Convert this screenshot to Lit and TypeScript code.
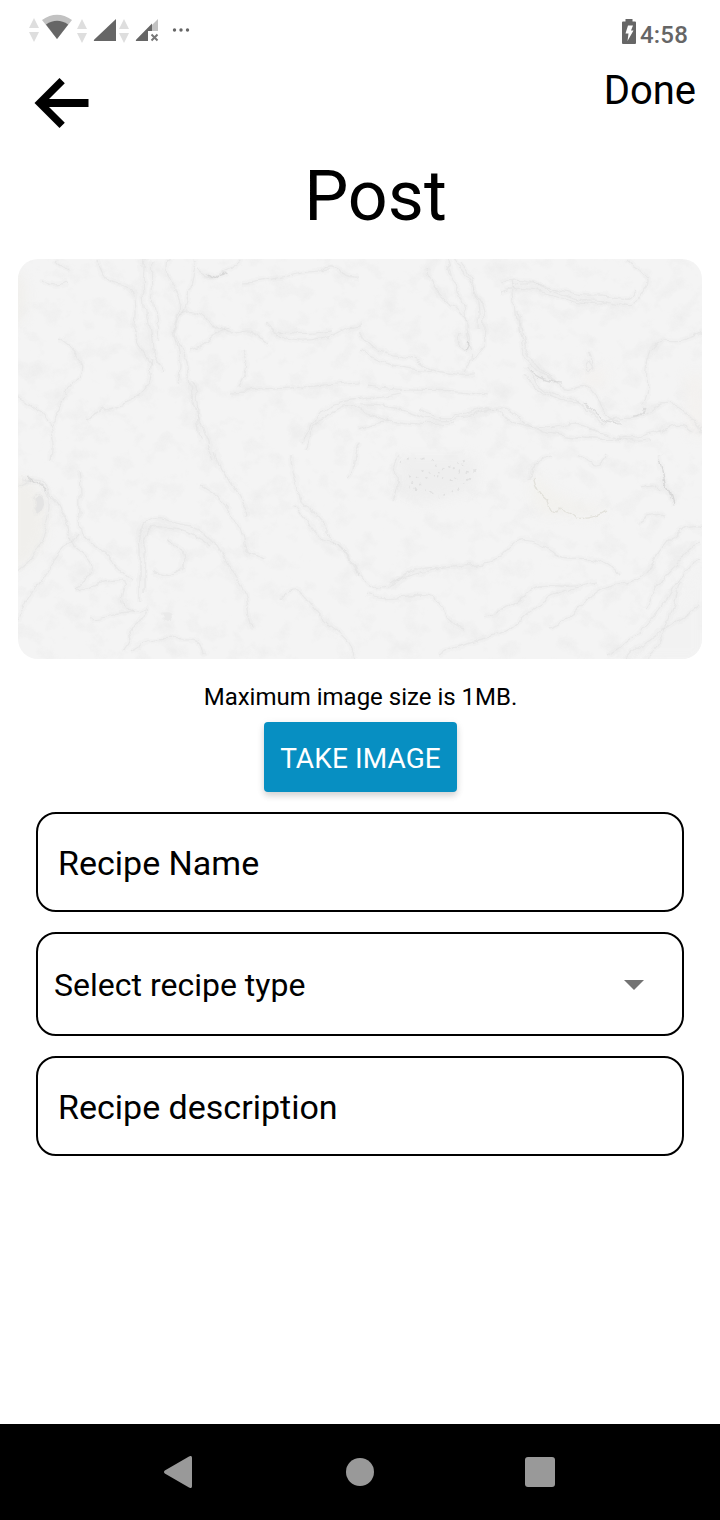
import { LitElement, html, css, svg } from "lit";
import { customElement, property } from "lit/decorators.js";

@customElement("status-bar")
class StatusBar extends LitElement {
  static styles = css`
    :host { display: flex; justify-content: space-between; height: 64px; color: #666; }
    svg { display: block; }
    .right { display: flex; align-items: flex-start; padding-right: 32px; }
    .battery { margin: 19px 4px 0 0; }
    .time { font-size: 24px; font-weight: 500; line-height: 28px; padding-top: 21px; letter-spacing: 0.2px; }
  `;
  render() {
    return html`
      <svg width="200" height="60" viewBox="0 0 200 60">
        <g fill="#dedede">
          <path d="M34 18l5 10H29zM29 32h10l-5 10z" />
          <path d="M82 19l5 10H77zM77 33h10l-5 10z" />
          <path d="M124 19l5 10h-10zM119 33h10l-5 10z" />
        </g>
        <path fill="#c2c2c2" d="M42 20Q57 9.500 72 20L57 39z" />
        <path fill="#666" d="M46 24.500Q57 17 68.200 24.500L57 39z" />
        <path fill="#666" d="M116 19v22H95q-2 0-.7-1.500z" />
        <path fill="#c2c2c2" d="M158 19v12h-6v-6z" />
        <path fill="#666" d="M152 23.500V31h-4v10h-11q-2 0-.7-1.500z" />
        <path fill="none" stroke="#777" stroke-width="2" d="M151.500 34.500l6 6m0-6l-6 6" />
        <g fill="#666"><circle cx="174.500" cy="30" r="1.700" /><circle cx="181" cy="30" r="1.700" /><circle cx="187.500" cy="30" r="1.700" /></g>
      </svg>
      <div class="right">
        <svg class="battery" width="14" height="25" viewBox="0 0 14 25">
          <path fill="#666" d="M3.500 0h7v2.500H13q1 0 1 1V24q0 1-1 1H1q-1 0-1-1V3.500q0-1 1-1h2.500z" />
          <path fill="#fff" d="M6 6.500h5L9 11.500h2.500L5.500 22l1-7.500H3.500z" />
        </svg>
        <span class="time">4:58</span>
      </div>`;
  }
}

const veins = [
  "M96 259C100 275 108 284 122 284C138 288 137 310 135 325C132 344 145 356 153 366",
  "M145 259C140 295 148 320 151 340S156 360 164 372",
  "M152 262C149 292 158 318 158 342",
  "M168 259C163 285 180 290 181 302S170 322 176 340S180 370 178 385",
  "M196 262C188 282 192 300 184 312C170 322 176 340 184 352C193 366 188 390 196 410S207 436 213 459",
  "M194 380C198 400 198 420 201 440",
  "M198 270q14 12 28 1q12-4 18-14",
  "M206 272q8 10 22 2",
  "M180 315C205 300 214 340 238 333C250 328 255 332 268 344",
  "M244 283C275 282 300 270 330 270",
  "M268 322C280 345 308 342 320 339C338 336 338 328 360 325",
  "M280 330C290 334 305 335 332 331",
  "M191 350C209 345 209 332 230 330",
  "M243 350C253 370 240 380 239 386",
  "M230 392C275 390 320 385 360 382",
  "M88 420C110 400 130 410 144 388C153 385 150 371 153 360",
  "M18 397C50 410 56 438 52 460",
  "M60 340C90 360 83 375 74 382C61 401 58 418 50 430",
  "M18 485C40 470 48 486 50 495C65 510 67 534 75 548C93 560 100 572 75 590",
  "M22 478Q45 480 50 499C52 530 33 560 18 570",
  "M35 498q9-7 9 5q-4 17-9 5z",
  "M18 620C30 595 42 578 54 562S73 540 78 532",
  "M79 470C85 500 74 530 90 542C110 553 121 575 132 580",
  "M139 600V548C136 528 148 517 162 519C180 525 198 526 206 534C222 546 229 570 238 582S247 615 251 630",
  "M145 593V550C140 530 150 525 162 527C180 527 192 532 210 545",
  "M75 590C100 585 122 573 128 585C117 605 130 618 143 610S129 635 122 650",
  "M90 618C103 618 120 611 133 612",
  "M132 650C153 635 172 640 190 640S198 655 208 655",
  "M168 540q18 7 14 28q-14 15-29 3",
  "M200 486C225 500 237 516 242 538S249 550 263 560",
  "M215 450C220 477 243 490 247 515",
  "M291 455C290 475 300 485 302 500C320 520 333 538 345 550S358 570 360 575",
  "M294 503C309 518 308 535 328 539S347 557 360 574S380 590 390 588C400 580 412 564 440 568",
  "M283 600C300 575 310 612 335 630S345 650 357 659",
  "M306 449C312 425 322 420 333 411C352 396 365 416 390 421",
  "M300 441C319 424 314 415 333 403C368 397 382 397 400 393",
  "M360 330C375 360 399 351 421 364S464 374 475 374",
  "M360 351C380 364 416 374 430 370",
  "M446 259C455 292 465 300 466 325S477 352 464 371",
  "M453 259C471 284 486 302 485 327S482 344 472 361",
  "M461 263C479 288 480 312 479 329",
  "M460 332q-5 15 6 20q6-16 1-21",
  "M426 270C436 300 457 301 466 322",
  "M500 282C530 270 555 300 591 300S627 317 642 293S635 270 625 259",
  "M512 285C539 276 563 297 594 295S622 309 636 290",
  "M500 292C535 278 570 310 606 302",
  "M512 280C517 305 515 320 521 340C524 362 537 374 555 382",
  "M518 310C521 345 530 361 548 376S565 390 581 386S602 421 620 421",
  "M526 366C537 392 557 395 569 397S591 419 606 423",
  "M523 375C540 392 560 402 579 402",
  "M589 350C598 363 582 378 585 364S595 375 590 366",
  "M606 423C620 412 635 423 648 411C670 395 681 407 693 420S695 430 702 436",
  "M642 406C652 392 641 377 652 349C665 330 677 352 702 330",
  "M360 405C409 404 412 420 440 420S478 412 498 410S520 430 552 434S622 445 654 432S680 422 694 431",
  "M367 385C418 395 452 386 488 395",
  "M420 410C450 430 482 399 500 414S545 430 567 425S610 447 650 440",
  "M360 428C388 412 415 431 454 422",
  "M660 455C661 475 670 488 673 507",
  "M642 487q13-8 20 5M638 524q8-11 28-8",
  "M702 528C680 520 665 546 650 567S617 580 600 590S573 620 550 627",
  "M702 542C691 545 686 554 674 565S651 593 644 610",
  "M390 585C414 570 438 569 462 566S488 563 497 559S511 543 522 540S547 547 556 554S587 553 602 562S614 572 617 575",
  "M485 616Q510 611 530 590C541 580 560 590 580 585",
  "M366 595C390 605 418 590 435 600S442 622 465 630",
  "M440 655C477 635 500 640 520 620S560 590 598 584",
  "M607 655C635 640 653 620 672 592S690 565 702 559",
  "M628 659C643 640 661 635 702 603",
  "M640 659C668 645 669 615 681 582",
  "M360 445C351 454 361 467 346 480",
  "M400 455C389 470 403 485 393 499",
  "M550 455q-20 8-20 25M607 455q-7 20-30 0",
  "M320 270C340 260 335 278 360 277",
  "M70 270q-10-4-16-11M44 280q9 10 22 3",
];

@customElement("marble-preview")
class MarblePreview extends LitElement {
  static styles = css`
    :host { display: block; height: 400px; margin: 0 18px; border-radius: 20px; overflow: hidden; background: #f4f4f4; }
    svg { display: block; width: 100%; height: 100%; }
  `;
  render() {
    return html`<svg viewBox="18 259 684 400" color-interpolation-filters="sRGB">
      <defs>
        <filter id="rough" x="0" y="0" width="1" height="1">
          <feTurbulence type="fractalNoise" baseFrequency="0.055" numOctaves="4" seed="8" />
          <feDisplacementMap in="SourceGraphic" scale="10" xChannelSelector="R" yChannelSelector="G" />
          <feGaussianBlur stdDeviation="0.7" />
        </filter>
        <filter id="soft" x="-.5" y="-.5" width="2" height="2"><feGaussianBlur stdDeviation="6" /></filter>
        <filter id="grain" x="0" y="0" width="1" height="1">
          <feTurbulence type="fractalNoise" baseFrequency="0.045 0.05" numOctaves="5" seed="21" />
          <feColorMatrix values="0 0 0 0 .83  0 0 0 0 .83  0 0 0 0 .83  2 0 0 0 -1" />
        </filter>
      </defs>
      <rect x="18" y="259" width="684" height="400" filter="url(#grain)" opacity=".24" />
      <g filter="url(#soft)">
        <path fill="#f0efec" d="M10 475q38 5 36 45t-36 50zM10 270q20 5 15 35t-15 15z" />
        <path fill="#f2f1ee" d="M530 485q8 35 20 30t40 2l20-7q-60-10-70-35z" />
        <path fill="#f3f1ef" d="M582 370l25-2-3 20-20-3zM685 375h20v60h-15z" />
        <path fill="#eeeeee" d="M400 458h76l-2 30-50 15-25-12z" />
        <path fill="#f2f2f2" d="M702 560v99h-80l50-50z" />
      </g>
      <g filter="url(#rough)" fill="none" stroke="#e0e0e0">
        <rect x="18" y="259" width="684" height="400" stroke="none" />
        ${veins.map((d) => svg`<path d=${d} stroke-width="6" opacity=".13" /><path d=${d} stroke-width="1.200" opacity=".55" />`)}
        <g stroke="#c8c8c8" stroke-width="1.200">
          <path d="M530 371q10 12 32 12M584 403q15 20 40 20M632 416q8 1 11-7M465 352q5-4 3-10M660 460l13 45M28 476l19 15M208 273q8 8 19 1" opacity=".5" />
          <path d="M533 477q4 18 15 25q5 15 12 7q10 1 15 8q18 2 30-7" stroke="#e2e1db" />
        </g>
        <path stroke="#d6d6d6" stroke-width="2" stroke-dasharray="1 5 2 7" opacity=".6" d="M402 462l25-5 18 12 20-10-10 22-33-9-14 15 29 10 26-10 11-15-28-5-30 22-12-20" />
        <path fill="#e4e4e4" stroke="none" d="M36 500q9-7 9 6q-4 12-9 5z" />
        <path fill="#eaeaea" stroke="none" d="M162 613q9-3 8 7q-7 1-8-7z" />
      </g>
    </svg>`;
  }
}

@customElement("form-field")
class FormField extends LitElement {
  @property() label = "";
  @property({ type: Boolean }) dropdown = false;
  static styles = css`
    .box { box-sizing: border-box; display: flex; align-items: center; justify-content: space-between; height: 100px; padding: 2px 38px 0 20px; border: 2px solid #000; border-radius: 20px; font-size: 34px; line-height: 40px; }
    .select { height: 104px; padding: 2px 38px 0 16px; font-size: 32px; }
    svg { display: block; }
  `;
  render() {
    return html`<div class="box ${this.dropdown ? "select" : ""}">
      <span>${this.label}</span>
      ${this.dropdown ? html`<svg width="20" height="10" viewBox="0 0 20 10"><path fill="#737373" d="M0 0h20L10 10z" /></svg>` : ""}
    </div>`;
  }
}

@customElement("nav-bar")
class NavBar extends LitElement {
  static styles = css`
    :host { display: flex; justify-content: center; height: 96px; background: #000; }
    .cell { display: flex; align-items: center; justify-content: center; width: 180px; }
    svg { display: block; fill: #999; }
  `;
  render() {
    return html`
      <div class="cell"><svg width="32" height="32" viewBox="0 0 32 32"><path d="M.8 14.600 25 .4q3-1.300 3 1.400v28.400q0 2.700-3 1.400L.8 17.400q-1.600-1.400 0-2.800z" /></svg></div>
      <div class="cell"><svg width="28" height="28" viewBox="0 0 28 28"><circle cx="14" cy="14" r="14" /></svg></div>
      <div class="cell"><svg width="30" height="30" viewBox="0 0 30 30"><rect width="30" height="30" rx="3" /></svg></div>`;
  }
}

@customElement("app-root")
class AppRoot extends LitElement {
  static styles = css`
    :host { display: flex; flex-direction: column; height: 1520px; background: #fff; color: #000; font-family: Roboto, sans-serif; overflow: hidden; }
    .header { display: flex; justify-content: space-between; align-items: flex-start; height: 84px; padding: 0 24px 0 34px; }
    .back { display: block; margin-top: 14px; }
    .done { font-size: 40px; line-height: 48px; padding-top: 3px; }
    .title { margin: 0; padding-left: 31px; height: 111px; font-size: 70px; font-weight: 400; line-height: 96px; text-align: center; }
    .note { margin-top: 23px; padding-left: 1px; font-size: 24px; line-height: 30px; text-align: center; }
    .take { align-self: center; box-sizing: border-box; width: 193px; height: 70px; margin: 10px 0 20px 1px; padding: 3px 0 0; border: 0; border-radius: 4px; background: #078fc2; color: #fff; font: 400 28px/34px Roboto, sans-serif; letter-spacing: 0.1px; white-space: nowrap; box-shadow: 0 4px 6px rgba(0,0,0,.13), 0 2px 10px rgba(0,0,0,.07); }
    .form { display: flex; flex-direction: column; gap: 20px; padding: 0 36px; }
    nav-bar { margin-top: auto; }
  `;
  render() {
    return html`
      <status-bar></status-bar>
      <div class="header">
        <svg class="back" width="56" height="50" viewBox="0 0 56 50"><path d="M.5 25 25.500 0l5.300 5.300L15 21h39.500v8H15l15.800 15.700-5.300 5.300z" /></svg>
        <span class="done">Done</span>
      </div>
      <h1 class="title">Post</h1>
      <marble-preview></marble-preview>
      <div class="note">Maximum image size is 1MB.</div>
      <button class="take">TAKE IMAGE</button>
      <div class="form">
        <form-field label="Recipe Name"></form-field>
        <form-field label="Select recipe type" dropdown></form-field>
        <form-field label="Recipe description"></form-field>
      </div>
      <nav-bar></nav-bar>`;
  }
}
